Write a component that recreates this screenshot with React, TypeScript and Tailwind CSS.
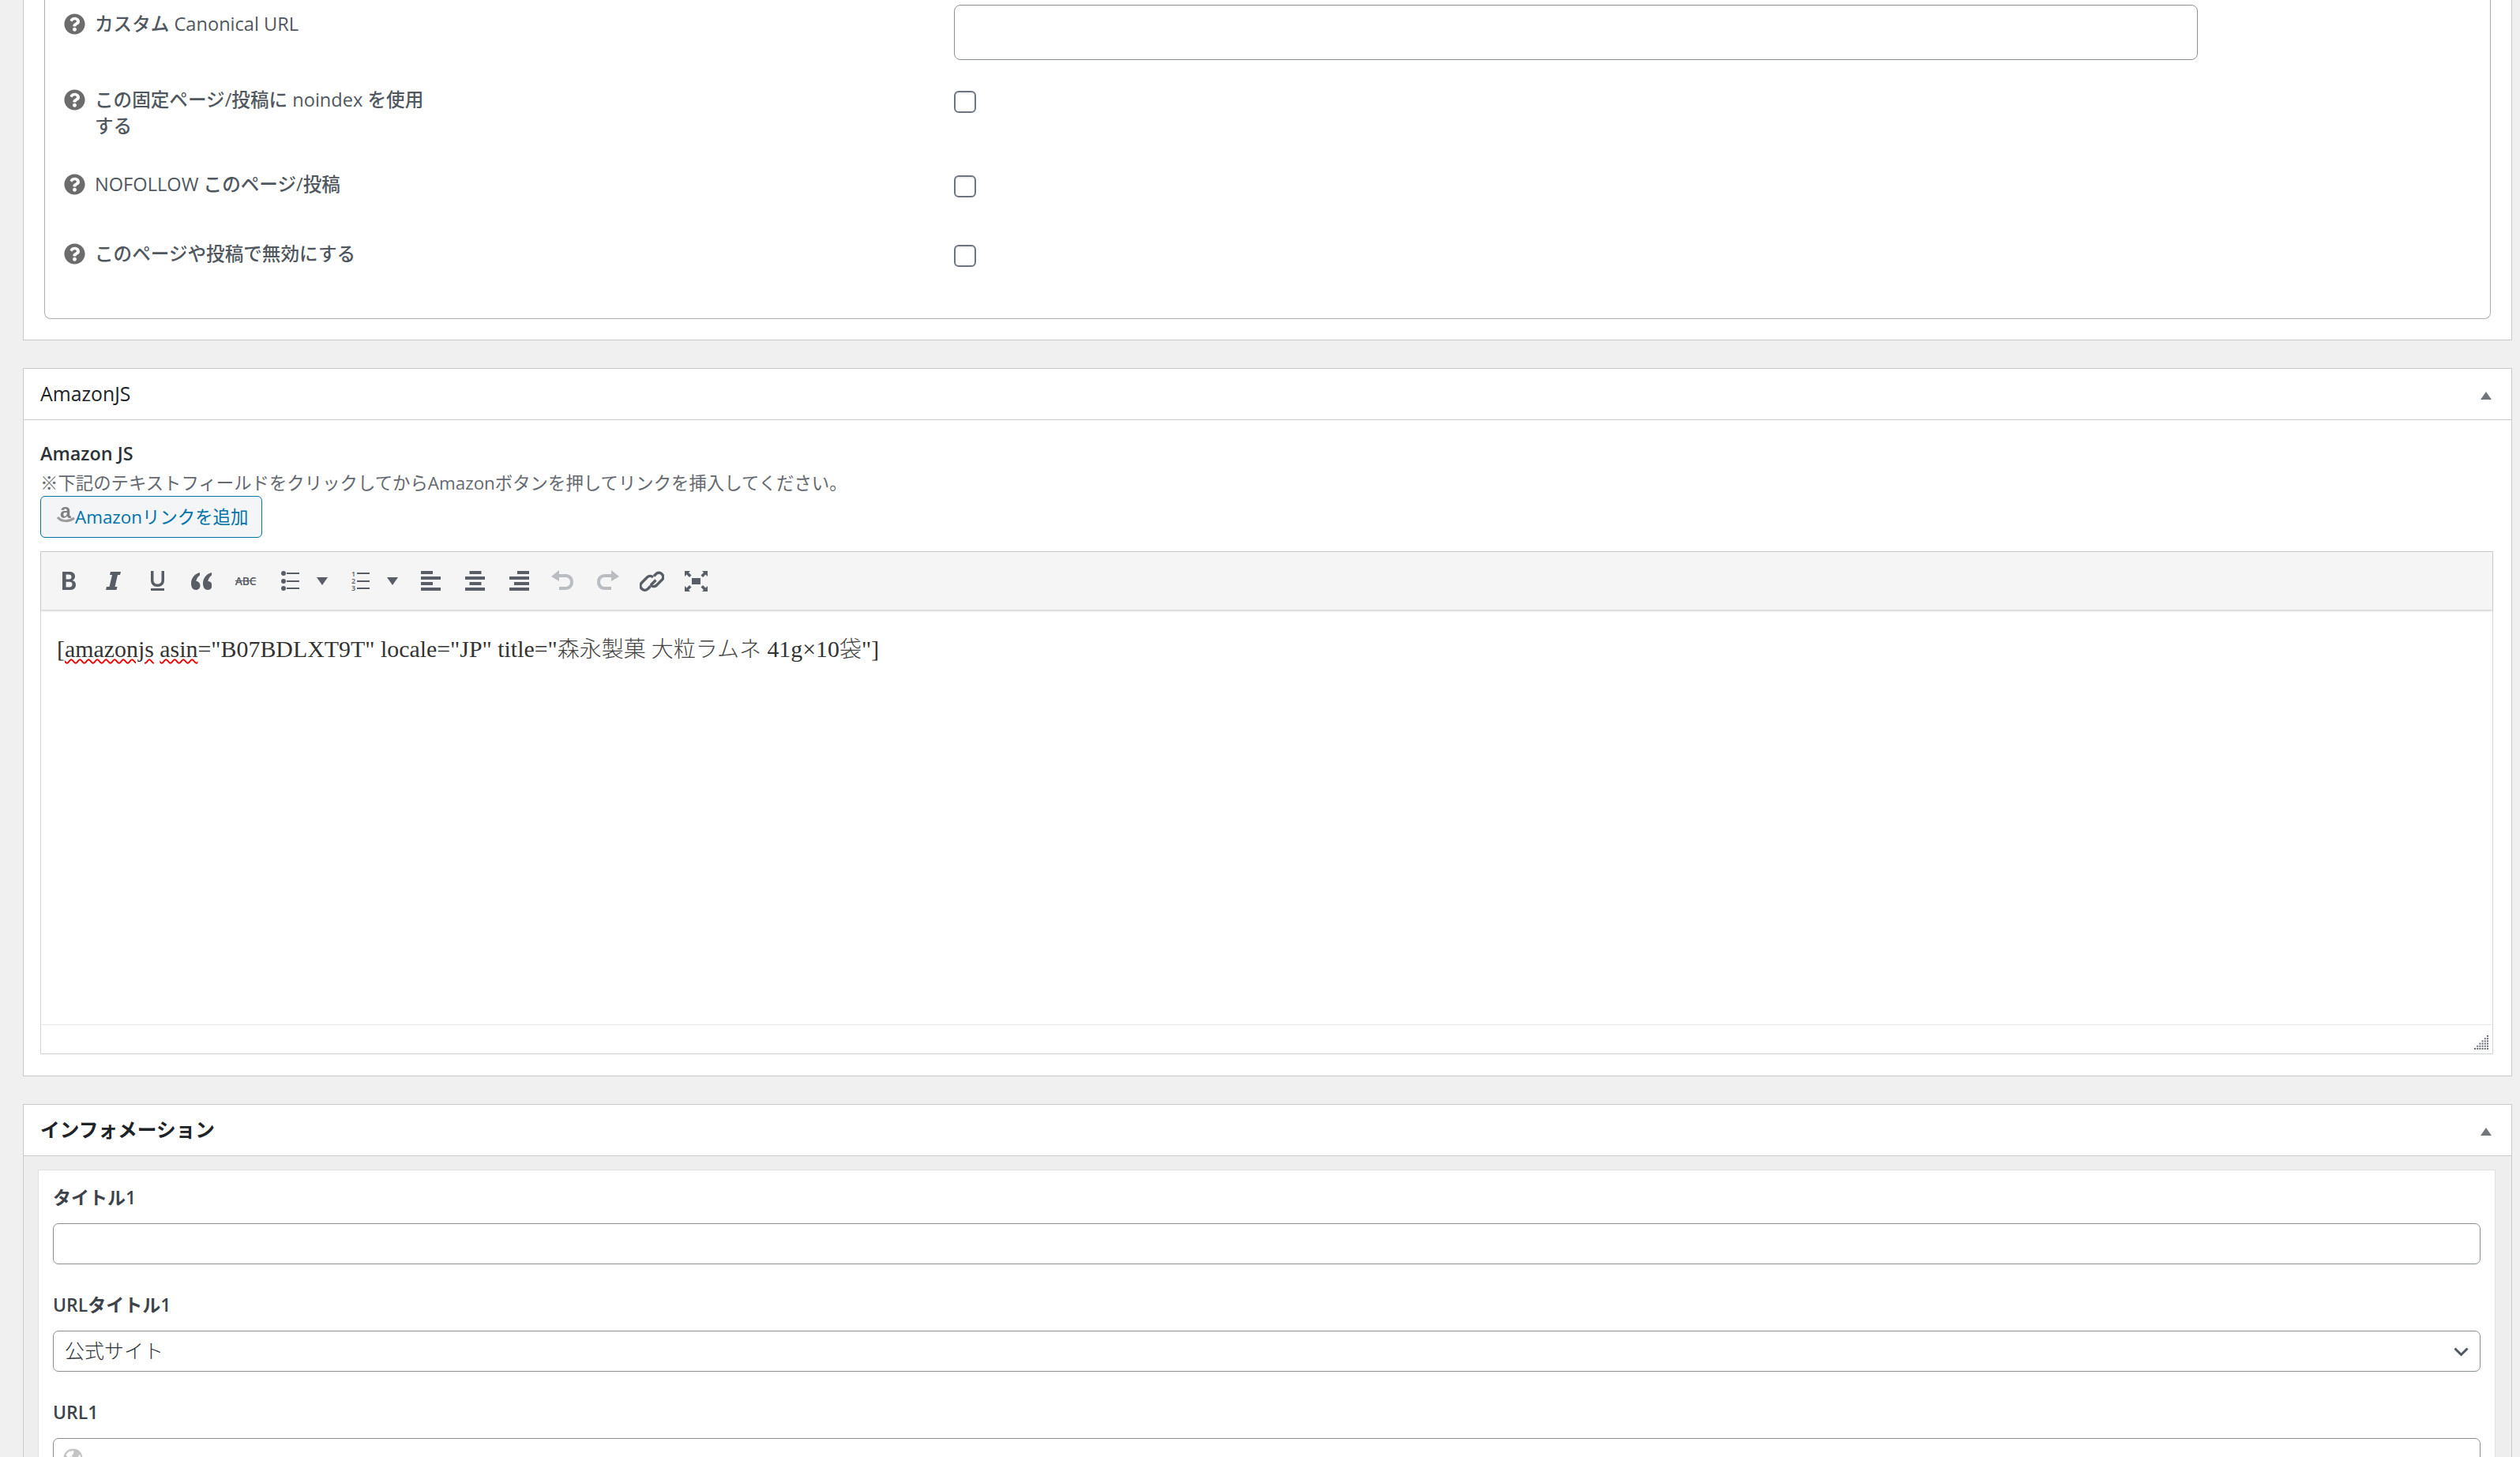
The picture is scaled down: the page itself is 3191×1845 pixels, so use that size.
import { FaGlobeAmericas, FaQuestionCircle } from "react-icons/fa";
import type { ReactNode } from "react";

const ICON = "#595d65";
const MUTED = "#b9bcc0";

function Help() {
  return <FaQuestionCircle className="w-[27px] h-[27px] shrink-0 text-[#6c6c6c]" />;
}

function OptionRow(props: { label: ReactNode; rowClass: string; labelClass: string; children: ReactNode }) {
  return (
    <div className={`flex ${props.rowClass}`}>
      <div className={`w-[1151px] shrink-0 pl-[24px] flex gap-[12px] ${props.labelClass}`}>
        <div className="h-[33px] pb-[1px] flex items-center">
          <Help />
        </div>
        <div className="text-[23.6px] leading-[33px] font-medium text-[#50575e]">{props.label}</div>
      </div>
      {props.children}
    </div>
  );
}

function Check() {
  return (
    <input
      type="checkbox"
      className="appearance-none block w-[28px] h-[28px] rounded-[6px] border-2 border-[#6d7580] bg-white shadow-[inset_0_2px_2px_rgba(0,0,0,0.08)]"
    />
  );
}

function PanelHeader(props: { title: string; bold?: boolean }) {
  return (
    <div className="h-[65px] border-b border-[#c9cacc] pl-[21px] pr-[25px] flex items-center justify-between">
      <h2 className={`text-[#1d2327] ${props.bold ? "text-[24.7px] font-bold" : "text-[24.8px] font-medium"}`}>{props.title}</h2>
      <svg width="14" height="10" viewBox="0 0 14 10" className="mt-[4px]">
        <path d="M7 0 14 10H0Z" fill="#72777c" />
      </svg>
    </div>
  );
}

function Svg(props: { w: number; h: number; children: ReactNode }) {
  return (
    <svg width={props.w} height={props.h} viewBox={`0 0 ${props.w} ${props.h}`} fill={ICON}>
      {props.children}
    </svg>
  );
}

function Btn(props: { children: ReactNode }) {
  return <div className="w-[56px] h-[40px] flex items-center justify-center shrink-0">{props.children}</div>;
}

function Caret() {
  return (
    <div className="w-[25px] mr-[8px] flex justify-center shrink-0">
      <svg width="14" height="10" viewBox="0 0 14 10">
        <path d="M0 0H14L7 10Z" fill={ICON} />
      </svg>
    </div>
  );
}

function AlignIcon(props: { kind: "l" | "c" | "r" }) {
  const x = props.kind === "l" ? 0 : props.kind === "c" ? 5.5 : 10;
  const x2 = props.kind === "l" ? 0 : props.kind === "c" ? 5.5 : 6;
  return (
    <Svg w={25} h={25}>
      <rect x={x} y="0" width="15" height="4" />
      <rect x="0" y="7" width="25" height="4" />
      <rect x={x2} y="14" width={props.kind === "r" ? 19 : 15} height="4" />
      <rect x="0" y="21" width="25" height="4" />
    </Svg>
  );
}

function Toolbar() {
  return (
    <div className="h-[74px] bg-[#f5f5f5] border-t border-[#c9cacc] shadow-[0_2px_2px_rgba(0,0,0,0.16)] pl-[7px] flex items-center relative">
      <Btn>
        <Svg w={17} h={23}>
          <path
            fillRule="evenodd"
            d="M0 0h8.500C13 0 16 1.800 16 5.800c0 2.600-1.300 4.400-3.400 5.100 2.700.6 4.400 2.500 4.400 5.500C17 20.800 13.800 23 9.300 23H0ZM4.600 3.500v6h3.600c2.400 0 3.300-1 3.300-3 0-2.100-1.100-3-3.600-3ZM4.600 12.800v6.700h4.200c2.600 0 3.700-1.100 3.700-3.400 0-2.200-1.200-3.300-3.900-3.300Z"
          />
        </Svg>
      </Btn>
      <Btn>
        <Svg w={19} h={23}>
          <path d="M6 0h13l-1 4h-3L11.500 19h3l-1 4H0l1-4h3.500L8 4H5Z" />
        </Svg>
      </Btn>
      <Btn>
        <Svg w={17} h={25}>
          <path d="M0 0h3.500v11.500C3.500 15 5.300 16.500 8.500 16.500s5-1.500 5-5V0H17v11.800C17 17 13.800 20 8.500 20S0 17 0 11.800ZM0 22h17v3H0Z" />
        </Svg>
      </Btn>
      <Btn>
        <Svg w={26} h={22}>
          <path d="M11 0C5 1.500 0 6.500 0 14c0 5 2.500 8 6 8s5.500-2.500 5.500-5.500c0-3-2-5.500-5.200-5.500.6-3.300 2.500-6 4.700-7.500Z" />
          <path d="M26 0c-6 1.500-11 6.500-11 14 0 5 2.500 8 6 8s5.500-2.500 5.500-5.500c0-3-2-5.500-5.200-5.500.6-3.300 2.500-6 4.700-7.500Z" />
        </Svg>
      </Btn>
      <Btn>
        <span className="text-[14px] leading-[20px] font-semibold text-[#595d65] line-through tracking-[-0.3px]">ABC</span>
      </Btn>
      <div className="flex items-center shrink-0">
        <Btn>
          <Svg w={23} h={25}>
            <circle cx="3" cy="3" r="3" />
            <circle cx="3" cy="13" r="3" />
            <circle cx="3" cy="22" r="3" />
            <rect x="7" y="2" width="16" height="2" />
            <rect x="7" y="12" width="16" height="2" />
            <rect x="7" y="21" width="16" height="2" />
          </Svg>
        </Btn>
        <Caret />
      </div>
      <div className="flex items-center shrink-0">
        <Btn>
          <div className="flex gap-[1px] items-center">
            <div className="flex flex-col items-center w-[6px] text-[9px] leading-[9px] font-semibold text-[#595d65]">
              <span>1</span>
              <span>2</span>
              <span>3</span>
            </div>
            <Svg w={16} h={27}>
              <rect x="0" y="3" width="16" height="2" />
              <rect x="0" y="13" width="16" height="2" />
              <rect x="0" y="22" width="16" height="2" />
            </Svg>
          </div>
        </Btn>
        <Caret />
      </div>
      <Btn><AlignIcon kind="l" /></Btn>
      <Btn><AlignIcon kind="c" /></Btn>
      <Btn><AlignIcon kind="r" /></Btn>
      <Btn>
        <svg width="30" height="27" viewBox="0 0 30 27" fill="none">
          <path d="M0 8 10 0v5h8c6 0 10 4 10 10s-4 10-10 10H10v-4h8c3.600 0 6-2.500 6-6s-2.400-6-6-6h-8v5Z" fill={MUTED} />
        </svg>
      </Btn>
      <Btn>
        <svg width="30" height="27" viewBox="0 0 30 27" fill="none">
          <path d="M30 8 20 0v5h-8C6 5 2 9 2 15s4 10 10 10h8v-4h-8c-3.600 0-6-2.500-6-6s2.400-6 6-6h8v5Z" fill={MUTED} />
        </svg>
      </Btn>
      <Btn>
        <svg width="31" height="30" viewBox="0 0 31 30" fill="none" stroke={ICON} strokeWidth="3.400">
          <path d="M14 20 20.500 13.500M18 8.500l3.500-3.500a5.500 5.500 0 0 1 7.500 7.500l-8 8a5.500 5.500 0 0 1-7.500-1" />
          <path d="M17 10a5.500 5.500 0 0 0-7.500 0l-7 7a5.500 5.500 0 0 0 7.500 8l3.500-3.500" />
        </svg>
      </Btn>
      <Btn>
        <Svg w={29} h={26}>
          <rect x="9" y="9" width="11" height="8" />
          <path d="M0 0h7L5 2l3.500 3.500L6 8 2.500 4.500 0 7ZM29 0h-7l2 2-3.500 3.500L23 8l3.500-3.500L29 7ZM0 26h7l-2-2 3.500-3.500L6 18l-3.500 3.500L0 19ZM29 26h-7l2-2-3.500-3.500L23 18l3.500 3.500L29 19Z" />
        </Svg>
      </Btn>
    </div>
  );
}

function ResizeGrip() {
  const dots: [number, number][] = [];
  for (let r = 0; r < 6; r++) {
    for (let c = 5 - r; c < 6; c++) {
      dots.push([c * 3.2, r * 3.2]);
    }
  }
  return (
    <svg width="18" height="18" viewBox="0 0 18 18" className="absolute right-[4px] bottom-[5px]">
      {dots.map(([x, y]) => (
        <rect key={`${x}-${y}`} x={x} y={y} width="2" height="2" fill="#6a6f77" />
      ))}
    </svg>
  );
}

function AmazonGlyph() {
  return (
    <div className="relative w-[23px] h-[22px] mb-[8px] shrink-0 blur-[0.5px]">
      <span className="absolute left-[4px] -top-[5px] text-[25px] leading-[24px] font-bold font-['Liberation_Sans',sans-serif] text-[#808080]">a</span>
      <svg width="23" height="22" viewBox="0 0 23 22" className="absolute left-0 top-0">
        <path d="M1 15c5 6 14 6 21 1" fill="none" stroke="#9c9c9c" strokeWidth="3" />
      </svg>
    </div>
  );
}

function Field(props: { label: string; children: ReactNode }) {
  return (
    <div className="h-[136px]">
      <div className="h-[67px] pt-[17px] text-[23px] leading-[35px] font-semibold text-[#3c434a]">{props.label}</div>
      {props.children}
    </div>
  );
}

const wavy = "underline decoration-wavy decoration-[#f00000] decoration-2 underline-offset-2";
const cjk = "text-[28px] font-light text-[#444]";

export default function App() {
  return (
    <div className="h-[1845px] overflow-hidden bg-[#f0f0f1] pl-[29px] pr-[10px] font-['Open_Sans','Noto_Sans_CJK_JP',sans-serif]">
      {/* SEO options, scrolled so the top is cut off */}
      <section className="h-[431px] bg-white border-x border-b border-[#c9cacc] px-[26px]">
        <div className="h-[404px] border-x border-b border-[#aeaeae] rounded-b-[8px]">
          <OptionRow label="カスタム Canonical URL" rowClass="h-[100px]" labelClass="pt-[14px]">
            <input className="block w-[1575px] h-[70px] mt-[6px] rounded-[8px] border border-[#8c8f94] bg-white" />
          </OptionRow>
          <OptionRow
            label={<>この固定ページ/投稿に noindex を使用<br />する</>}
            rowClass="h-[105px] pt-[15px]"
            labelClass="-mt-[5px]"
          >
            <Check />
          </OptionRow>
          <OptionRow label="NOFOLLOW このページ/投稿" rowClass="h-[88px] pt-[17px]" labelClass="-mt-[5px]">
            <Check />
          </OptionRow>
          <OptionRow label="このページや投稿で無効にする" rowClass="pt-[17px]" labelClass="-mt-[5px]">
            <Check />
          </OptionRow>
        </div>
      </section>

      {/* AmazonJS */}
      <section className="mt-[35px] h-[897px] bg-white border border-[#c9cacc]">
        <PanelHeader title="AmazonJS" />
        <div className="pl-[21px] pr-[23px]">
          <div className="pt-[26px] text-[23.4px] leading-[33px] font-semibold text-[#2c3338]">Amazon JS</div>
          <div className="mt-[5px] text-[22.4px] leading-[32px] text-[#646970] whitespace-nowrap">
            ※下記のテキストフィールドをクリックしてからAmazonボタンを押してリンクを挿入してください。
          </div>
          <button
            type="button"
            className="w-[281px] h-[53px] rounded-[6px] border border-[#0073aa] bg-[#f3f5f6] text-[#0073aa] text-[22.4px] pl-[20px] flex items-center"
          >
            <AmazonGlyph />
            <span className="whitespace-nowrap">Amazonリンクを追加</span>
          </button>
          <div className="mt-[17px] border-x border-b border-[#d2d3d4]">
            <Toolbar />
            <div className="h-[525px] pl-[20px] pt-[29px] text-[29.9px] leading-[42px] text-[#333] whitespace-nowrap font-['Liberation_Serif','Noto_Sans_CJK_JP',serif]">
              [<span className={wavy}>amazonjs</span> <span className={wavy}>asin</span>
              ="B07BDLXT9T" locale="JP" title="<span className={cjk}>森永製菓 大粒ラムネ</span> 41g×10
              <span className={cjk}>袋</span>"]
            </div>
            <div className="h-[37px] border-t border-[#e6e6e6] mx-[1px] relative">
              <ResizeGrip />
            </div>
          </div>
        </div>
      </section>

      {/* Information */}
      <section className="mt-[35px] h-[600px] bg-[#eeeeee] border border-[#c9cacc]">
        <div className="bg-white">
          <PanelHeader title="インフォメーション" bold />
        </div>
        <div className="pt-[17px] pl-[18px] pr-[20px]">
          <div className="bg-white border border-[#e0e0e0] px-[18px]">
            <Field label="タイトル1">
              <input className="block w-full h-[52px] rounded-[7px] border border-[#8c8f94] bg-white" />
            </Field>
            <Field label="URLタイトル1">
              <div className="relative">
                <select className="appearance-none block w-full h-[52px] rounded-[7px] border border-[#8c8f94] bg-white pl-[14px] text-[25px] font-light text-[#2c3338]">
                  <option>公式サイト</option>
                </select>
                <svg width="19" height="12" viewBox="0 0 19 12" className="absolute right-[15px] top-[21px]">
                  <path d="M1.500 1.500 9.500 9.500 17.500 1.500" fill="none" stroke="#50575e" strokeWidth="3" />
                </svg>
              </div>
            </Field>
            <Field label="URL1">
              <div className="relative">
                <input className="block w-full h-[52px] rounded-[7px] border border-[#8c8f94] bg-white" />
                <FaGlobeAmericas className="absolute left-[13px] top-[13px] w-[25px] h-[25px] text-[#c4c4c4]" />
              </div>
            </Field>
          </div>
        </div>
      </section>
    </div>
  );
}
